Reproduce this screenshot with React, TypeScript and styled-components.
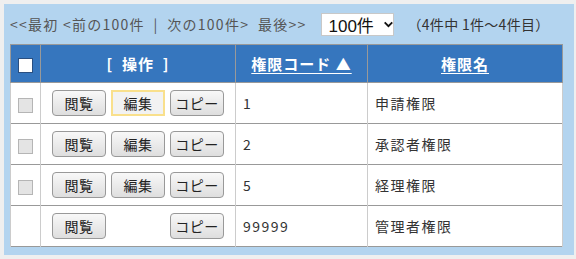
import styled, { createGlobalStyle } from 'styled-components';

const GlobalStyle = createGlobalStyle`
    html, body {
        margin: 0;
        background: #efefef;
    }
    body {
        padding: 4px 2px 5px 4px;
        font-family: 'Noto Sans CJK JP', 'Noto Sans', sans-serif;
    }
`;

const Panel = styled.div`
    width: 552px;
    background: #b3d4ef;
    padding: 0 12px 8px 6px;
`;

const Pager = styled.div`
    display: flex;
    align-items: center;
    height: 40px;
    font-size: 14px;
    color: #555;
    white-space: pre;
`;

const PagerLinks = styled.span`
    letter-spacing: 1.25px;
`;

const SelectBox = styled.div`
    display: flex;
    align-items: center;
    gap: 4px;
    margin-left: 15px;
    width: 73px;
    height: 23px;
    box-sizing: border-box;
    padding-left: 6px;
    background: #fff;
    border: 1px solid #c8c8c8;
    font-family: 'Liberation Sans', 'Noto Sans CJK JP', sans-serif;
    font-size: 17px;
    color: #111;
`;

const Count = styled.span`
    margin-left: 13px;
    color: #333;
    letter-spacing: 0.3px;
`;

const Table = styled.table`
    width: 552px;
    border-collapse: collapse;
    table-layout: fixed;
    background: #fff;
    border: 1px solid #999;
`;

const HeadCell = styled.th<{ $w: number }>`
    width: ${(p) => p.$w}px;
    height: 37px;
    padding: 0;
    background: #3676be;
    color: #fff;
    font-size: 15px;
    font-weight: bold;
    letter-spacing: 1px;
    border: 1px solid #999;
    text-align: center;
    white-space: pre;
`;

const HeadLink = styled.span`
    text-decoration: underline;
    text-underline-offset: 3px;
`;

const Row = styled.tr`
    height: 41px;
    border-bottom: 1px solid #999;
`;

const Cell = styled.td<{ $center?: boolean }>`
    padding: 0 0 0 7px;
    border-left: 1px solid #ccc;
    border-right: 1px solid #ccc;
    font-size: 14px;
    color: #333;
    letter-spacing: 1.5px;
    text-align: ${(p) => (p.$center ? 'center' : 'left')};
    ${(p) => p.$center && 'padding: 0;'}
`;

const Check = styled.span<{ $head?: boolean }>`
    display: inline-block;
    vertical-align: middle;
    width: 15px;
    height: 15px;
    box-sizing: border-box;
    background: ${(p) => (p.$head ? '#fff' : '#e4e4e4')};
    border: 1px solid ${(p) => (p.$head ? '#2a4f80' : '#b5b5b5')};
`;

const Buttons = styled.div`
    display: flex;
    justify-content: center;
    gap: 5px;
`;

const Button = styled.button<{ $focus?: boolean; $hidden?: boolean }>`
    width: 54px;
    height: 26px;
    padding: 0;
    box-sizing: border-box;
    font-family: 'Noto Sans CJK JP', sans-serif;
    font-size: 14px;
    letter-spacing: 0.5px;
    color: #222;
    border-radius: ${(p) => (p.$focus ? '0' : '4px')};
    border: ${(p) => (p.$focus ? '2px solid #f9e08c' : '1px solid #999')};
    background: ${(p) =>
        p.$focus ? '#f2f2f2' : 'linear-gradient(#f8f8f8, #dedede)'};
    visibility: ${(p) => (p.$hidden ? 'hidden' : 'visible')};
`;

const rows = [
    { code: '1', name: '申請権限', check: true, edit: true, focus: true },
    { code: '2', name: '承認者権限', check: true, edit: true },
    { code: '5', name: '経理権限', check: true, edit: true },
    { code: '99999', name: '管理者権限', check: false, edit: false },
];

const Chevron = () => (
    <svg width="13" height="9" viewBox="0 0 13 9">
        <path d="M2 2 L6.5 6.5 L11 2" fill="none" stroke="#111" strokeWidth="2.2" />
    </svg>
);

const App = () => (
    <>
        <GlobalStyle />
        <Panel>
            <Pager>
                <PagerLinks>{'<<最初 <前の100件  |  次の100件>  最後>>'}</PagerLinks>
                <SelectBox>
                    100件 <Chevron />
                </SelectBox>
                <Count>（4件中 1件～4件目）</Count>
            </Pager>
            <Table>
                <thead>
                    <tr>
                        <HeadCell $w={29}>
                            <Check $head />
                        </HeadCell>
                        <HeadCell $w={194}>{'[  操作  ]'}</HeadCell>
                        <HeadCell $w={131}>
                            <HeadLink>権限コード ▲</HeadLink>
                        </HeadCell>
                        <HeadCell $w={194}>
                            <HeadLink>権限名</HeadLink>
                        </HeadCell>
                    </tr>
                </thead>
                <tbody>
                    {rows.map((r) => (
                        <Row key={r.code}>
                            <Cell $center>{r.check && <Check />}</Cell>
                            <Cell $center>
                                <Buttons>
                                    <Button>閲覧</Button>
                                    <Button $focus={r.focus} $hidden={!r.edit}>
                                        編集
                                    </Button>
                                    <Button>コピー</Button>
                                </Buttons>
                            </Cell>
                            <Cell>{r.code}</Cell>
                            <Cell>{r.name}</Cell>
                        </Row>
                    ))}
                </tbody>
            </Table>
        </Panel>
    </>
);

export default App;
